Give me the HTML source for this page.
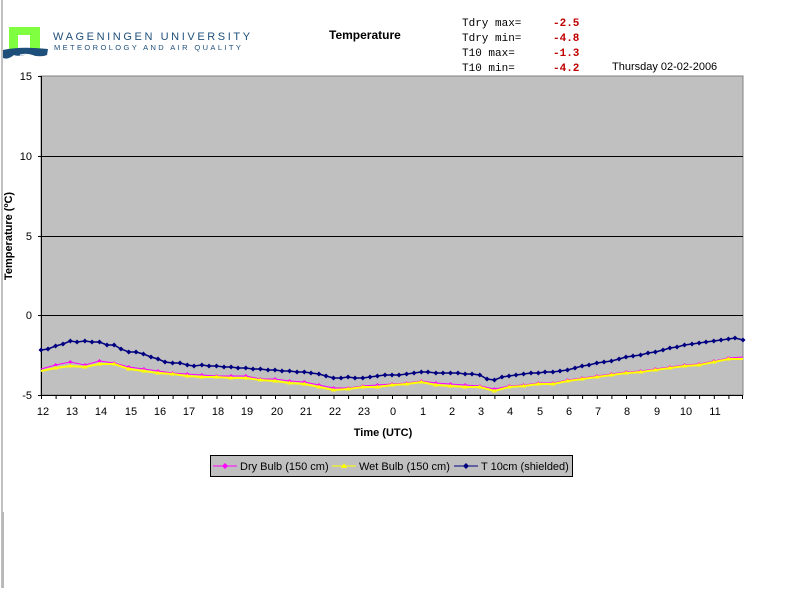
<!DOCTYPE html>
<html><head><meta charset="utf-8"><style>
body{margin:0;background:#fff;width:790px;height:588px;overflow:hidden;font-family:"Liberation Sans",Arial,sans-serif}
</style></head><body>
<svg width="790" height="588" viewBox="0 0 790 588" xmlns="http://www.w3.org/2000/svg" font-family="Liberation Sans, Arial, sans-serif">
<defs>
<marker id="mb" markerUnits="userSpaceOnUse" markerWidth="6" markerHeight="6" refX="3" refY="3"><path d="M3 0.5 L5.5 3 L3 5.5 L0.5 3Z" fill="#000080"/></marker>
<marker id="my" markerUnits="userSpaceOnUse" markerWidth="6" markerHeight="6" refX="3" refY="3"><path d="M3 0.5 L5.5 4.5 L0.5 4.5Z" fill="#ffff00"/></marker>
<marker id="mp" markerUnits="userSpaceOnUse" markerWidth="6" markerHeight="6" refX="3" refY="3"><path d="M3 1 L5 3 L3 5 L1 3Z" fill="#ff00ff"/></marker>
</defs>
<rect x="1" y="0" width="2" height="588" fill="#c0c0c0"/>
<rect x="2" y="512" width="2" height="76" fill="#b8b8b8"/>
<!-- logo -->
<rect x="9" y="27" width="31" height="23" fill="#80ff40"/>
<path d="M18 50 V35 H30 V50Z" fill="#fff"/>
<path d="M3 50 Q20 46 48 49 L47 55 Q40 58 28 54 Q18 57 14 55 Q8 60 3 58Z" fill="#1e4f7a"/>
<path d="M20 55 Q27 53 34 56" stroke="#fff" stroke-width="1" fill="none"/>
<text x="53" y="40" font-size="11" fill="#1e4f7a" letter-spacing="2.6">WAGENINGEN UNIVERSITY</text>
<text x="54" y="50" font-size="7.5" fill="#1e4f7a" letter-spacing="2.4">METEOROLOGY AND AIR QUALITY</text>
<text x="329" y="39" font-size="12" font-weight="bold">Temperature</text>
<g font-family="Liberation Mono, monospace" font-size="11">
<text x="462" y="26">Tdry max=</text><text x="462" y="41">Tdry min=</text>
<text x="462" y="56">T10  max=</text><text x="462" y="71">T10  min=</text>
<g fill="#c00000" font-weight="bold"><text x="553" y="26">-2.5</text><text x="553" y="41">-4.8</text><text x="553" y="56">-1.3</text><text x="553" y="71">-4.2</text></g>
</g>
<text x="612" y="70" font-size="11">Thursday 02-02-2006</text>
<!-- plot -->
<rect x="41" y="76" width="702" height="319" fill="#c0c0c0" stroke="#808080"/>
<g stroke="#000" stroke-width="1">
<line x1="41" y1="156.5" x2="743" y2="156.5"/><line x1="41" y1="236.5" x2="743" y2="236.5"/><line x1="41" y1="315.5" x2="743" y2="315.5"/>
<line x1="41.5" y1="76" x2="41.5" y2="395"/><line x1="38" y1="395.5" x2="743" y2="395.5"/>
<line x1="38" y1="76.5" x2="41" y2="76.5"/><line x1="38" y1="156.5" x2="41" y2="156.5"/><line x1="38" y1="236.5" x2="41" y2="236.5"/><line x1="38" y1="315.5" x2="41" y2="315.5"/>
</g>
<path stroke="#000" d="M41.5 395v4M56.1 395v4M70.8 395v4M85.4 395v4M100 395v4M114.6 395v4M129.3 395v4M143.9 395v4M158.5 395v4M173.1 395v4M187.8 395v4M202.4 395v4M217 395v4M231.6 395v4M246.3 395v4M260.9 395v4M275.5 395v4M290.1 395v4M304.8 395v4M319.4 395v4M334 395v4M348.6 395v4M363.3 395v4M377.9 395v4M392.5 395v4M407.1 395v4M421.8 395v4M436.4 395v4M451 395v4M465.6 395v4M480.3 395v4M494.9 395v4M509.5 395v4M524.1 395v4M538.8 395v4M553.4 395v4M568 395v4M582.6 395v4M597.3 395v4M611.9 395v4M626.5 395v4M641.1 395v4M655.8 395v4M670.4 395v4M685 395v4M699.6 395v4M714.3 395v4M728.9 395v4M742.5 395v4"/>
<g font-size="11" text-anchor="end"><text x="32" y="80">15</text><text x="32" y="160">10</text><text x="32" y="240">5</text><text x="32" y="319">0</text><text x="32" y="399">-5</text></g>
<g font-size="11" text-anchor="middle">
<text x="43" y="415">12</text><text x="72" y="415">13</text><text x="101" y="415">14</text><text x="131" y="415">15</text><text x="160" y="415">16</text><text x="189" y="415">17</text><text x="218" y="415">18</text><text x="247" y="415">19</text><text x="277" y="415">20</text><text x="306" y="415">21</text><text x="335" y="415">22</text><text x="364" y="415">23</text><text x="393" y="415">0</text><text x="423" y="415">1</text><text x="452" y="415">2</text><text x="481" y="415">3</text><text x="510" y="415">4</text><text x="540" y="415">5</text><text x="569" y="415">6</text><text x="598" y="415">7</text><text x="627" y="415">8</text><text x="657" y="415">9</text><text x="686" y="415">10</text><text x="715" y="415">11</text>
</g>
<text x="383" y="436" font-size="11" font-weight="bold" text-anchor="middle">Time (UTC)</text>
<text transform="translate(12,236) rotate(-90)" font-size="11" font-weight="bold" text-anchor="middle">Temperature (ºC)</text>
<!-- series -->
<polyline fill="none" stroke="#ff00ff" stroke-width="1" marker-mid="url(#mp)" points="41,369 55.6,365 70.3,362 84.9,365 99.5,361 114.1,363 128.8,367 143.9,369 158,371 172.6,373 187.3,374 201.9,375 216.5,376 231.1,376 245.8,376 260.4,379 275,379 289.6,381 304.3,382 318.9,385 333.5,388 348.1,388 362.8,386 377.4,385 392,384 406.6,383 421.3,381 435.9,383 450.5,384 465.1,385 479.8,386 494.4,389 509,386 523.6,385 538.3,383 552.9,383 567.5,380 582.1,378 596.8,376 611.4,374 626,372 640.6,371 655.3,369 669.9,367 684.5,365 699.1,364 713.8,361 728.4,358 743,357"/>
<polyline fill="none" stroke="#ffff00" stroke-width="2" marker-mid="url(#my)" points="41,371 55.6,368 70.3,366 84.9,367 99.5,364 114.1,364 128.8,369 143.9,371 158,373 172.6,374 187.3,376 201.9,377 216.5,377 231.1,378 245.8,378 260.4,380 275,381 289.6,383 304.3,384 318.9,387 333.5,390 348.1,389 362.8,387 377.4,387 392,385 406.6,384 421.3,382 435.9,385 450.5,386 465.1,387 479.8,387 494.4,391 509,387 523.6,386 538.3,384 552.9,384 567.5,381 582.1,379 596.8,377 611.4,375 626,373 640.6,372 655.3,370 669.9,368 684.5,366 699.1,365 713.8,362 728.4,359 743,359"/>
<polyline fill="none" stroke="#000080" stroke-width="1.5" marker-start="url(#mb)" marker-mid="url(#mb)" marker-end="url(#mb)" points="41,350 48,349 55.6,346 63,344 70.3,341 77,342 84.9,341 92,342 99.5,342 107,345 114.1,345 121,349 128.8,352 136,352 143.4,354 151,357 158,359 165,362 172.6,363 180,363 187.3,365 194,366 201.9,365 209,366 216.5,366 224,367 231.1,367 238,368 245.8,368 253,369 260.4,369 268,370 275,370 282,371 289.6,371 297,372 304.3,372 311,373 318.9,374 326,376 333.5,378 341,378 348.1,377 355,378 362.8,378 370,377 377.4,376 385,375 392,375 399,375 406.6,374 414,373 421.3,372 428,372 435.9,373 443,373 450.5,373 458,373 465.1,374 472,374 479.8,375 487,379 494.4,380 502,377 509,376 516,375 523.6,374 531,373 538.3,373 545,372 552.9,372 560,371 567.5,370 575,368 582.1,366 589,365 596.8,363 604,362 611.4,361 619,359 626,357 633,356 640.6,355 648,353 655.3,352 663,350 669.9,348 677,347 684.5,345 692,344 699.1,343 706,342 713.8,341 721,340 728.4,339 735,338 743,340"/>
<!-- legend -->
<rect x="210.5" y="455.5" width="362" height="21" fill="#c0c0c0" stroke="#000"/>
<g font-size="11">
<line x1="213" y1="466" x2="237" y2="466" stroke="#ff00ff"/><path d="M225 463 L228 466 L225 469 L222 466Z" fill="#ff00ff"/>
<text x="240" y="470">Dry Bulb (150 cm)</text>
<line x1="332" y1="466" x2="356" y2="466" stroke="#ffff00"/><path d="M344 463 L347 468 L341 468Z" fill="#ffff00"/>
<text x="359" y="470">Wet Bulb (150 cm)</text>
<line x1="454" y1="466" x2="478" y2="466" stroke="#000080"/><path d="M466 463 L469 466 L466 469 L463 466Z" fill="#000080"/>
<text x="481" y="470">T 10cm (shielded)</text>
</g>
</svg>
</body></html>
